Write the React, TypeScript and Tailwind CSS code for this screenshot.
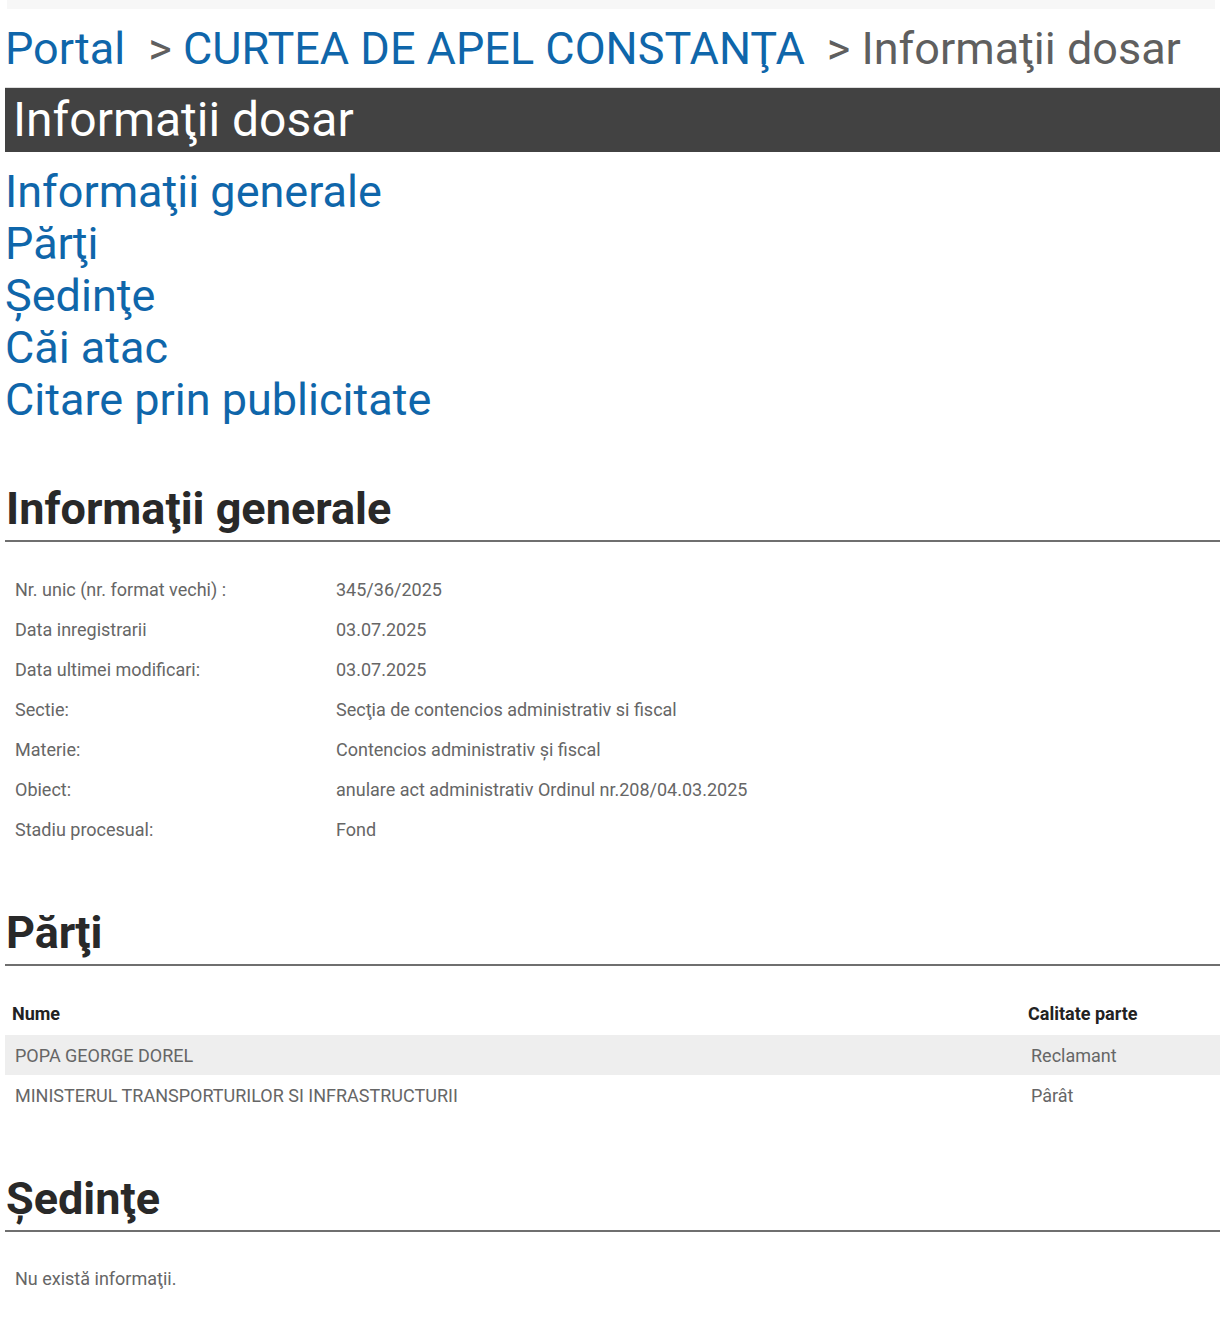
import * as React from "react";

const info: [string, string][] = [
  ["Nr. unic (nr. format vechi) :", "345/36/2025"],
  ["Data inregistrarii", "03.07.2025"],
  ["Data ultimei modificari:", "03.07.2025"],
  ["Sectie:", "Secţia de contencios administrativ si fiscal"],
  ["Materie:", "Contencios administrativ și fiscal"],
  ["Obiect:", "anulare act administrativ Ordinul nr.208/04.03.2025"],
  ["Stadiu procesual:", "Fond"],
];

const parti = [
  { nume: "POPA GEORGE DOREL", calitate: "Reclamant" },
  { nume: "MINISTERUL TRANSPORTURILOR SI INFRASTRUCTURII", calitate: "Pârât" },
];

function SectionTitle({ children }: { children: React.ReactNode }) {
  return (
    <h2 className="text-[45px] leading-[52px] font-bold text-[#292929] pl-[1px] pb-[5px] border-b-2 border-[#6f6f6f]">
      {children}
    </h2>
  );
}

export default function App() {
  return (
    <div
      className="min-h-screen bg-white pl-[5px] text-[#666666]"
      style={{ fontFamily: "Roboto, 'Noto Sans', sans-serif" }}
    >
      <div className="h-[9px] ml-[2px] mr-[5px] bg-[#f7f7f7]" />

      <div className="pt-[14px] mb-[12px] text-[45px] leading-[52px] whitespace-nowrap">
        <a href="#" className="text-[#0f66aa]">Portal</a>
        <span className="text-[#5f5f5f] ml-[23px]">&gt; </span>
        <a href="#" className="text-[#0f66aa]">CURTEA DE APEL CONSTANŢA</a>
        <span className="text-[#5f5f5f] ml-[22px]">&gt; Informaţii dosar</span>
      </div>

      <div className="border-t border-[#dddddd] bg-[#424242] h-[65px] pl-[8px]">
        <h1 className="text-[48px] leading-[64px] text-white">Informaţii dosar</h1>
      </div>

      <nav className="mt-[14px] flex flex-col text-[45px] leading-[52px] text-[#0f66aa]">
        <a href="#">Informaţii generale</a>
        <a href="#">Părţi</a>
        <a href="#">Ședinţe</a>
        <a href="#">Căi atac</a>
        <a href="#">Citare prin publicitate</a>
      </nav>

      <section className="mt-[57px]">
        <SectionTitle>Informaţii generale</SectionTitle>
        <div className="mt-[27px] text-[18px]">
          {info.map(([label, value]) => (
            <div key={label} className="flex h-[40px] items-center">
              <div className="w-[321px] pl-[10px]">{label}</div>
              <div className="pl-[10px]">{value}</div>
            </div>
          ))}
        </div>
      </section>

      <section className="mt-[58px]">
        <SectionTitle>Părţi</SectionTitle>
        <div className="mt-[26px] text-[18px]">
          <div className="flex h-[43px] items-center font-bold text-[#222222]">
            <div className="w-[1016px] pl-[7px]">Nume</div>
            <div className="pl-[7px]">Calitate parte</div>
          </div>
          {parti.map((p, i) => (
            <div
              key={p.nume}
              className={`flex h-[40px] items-center ${i % 2 === 0 ? "bg-[#eeeeee]" : ""}`}
            >
              <div className="w-[1016px] pl-[10px]">{p.nume}</div>
              <div className="pl-[10px]">{p.calitate}</div>
            </div>
          ))}
        </div>
      </section>

      <section className="mt-[58px] pb-[40px]">
        <SectionTitle>Ședinţe</SectionTitle>
        <div className="mt-[26px] text-[18px] h-[40px] flex items-center pl-[10px]">
          Nu există informaţii.
        </div>
      </section>
    </div>
  );
}
